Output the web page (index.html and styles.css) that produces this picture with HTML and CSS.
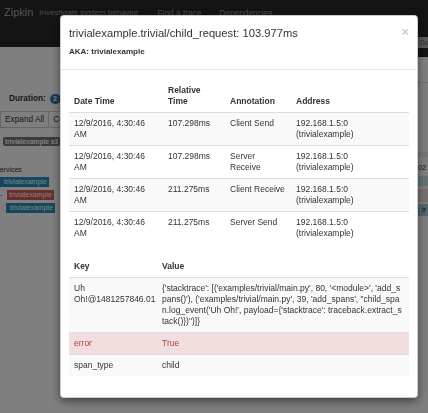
FILE: index.html
```html
<!DOCTYPE html>
<html lang="en">
<head>
<meta charset="utf-8">
<title>Zipkin - span detail</title>
<link rel="stylesheet" href="styles.css">
</head>
<body>
<header class="navbar">
  <span class="brand">Zipkin</span>
  <span class="tagline">Investigate system behavior</span>
  <span class="nav-link nav-find">Find a trace</span>
  <span class="nav-link">Dependencies</span>
  <div class="search-edge"><span class="go-btn">Go</span></div>
</header>

<main class="page">
  <section class="trace-side">
    <div class="duration"><span class="duration-label">Duration:</span><span class="badge">2</span></div>
    <div class="btn-group"><span class="btn">Expand All</span><span class="btn">Co</span></div>
    <div class="label-row"><span class="service-label">trivialexample x3</span></div>
    <div class="services-title">Services</div>
    <div class="svc-row"><span class="svc svc-blue">trivialexample</span></div>
    <div class="svc-row"><span class="dash">-</span><span class="svc svc-red">trivialexample</span></div>
    <div class="svc-row indent"><span class="svc svc-blue">trivialexample</span></div>
  </section>
  <section class="timeline-edge">
    <div class="tl-rule"></div>
    <div class="tl-band"></div>
    <div class="tl-tick">02</div>
    <div class="tl-row tl-row-blue"></div>
    <div class="tl-row tl-row-red"></div>
    <div class="tl-row tl-row-sel">: tr</div>
  </section>
</main>

<div class="backdrop"></div>

<div class="modal" role="dialog">
  <div class="modal-header">
    <span class="close">×</span>
    <h4 class="modal-title">trivialexample.trivial/child_request: 103.977ms</h4>
    <h5 class="aka">AKA: trivialexample</h5>
  </div>
  <div class="modal-body">
    <table class="table annotations">
      <colgroup><col class="c-date"><col class="c-rel"><col class="c-ann"><col class="c-addr"></colgroup>
      <thead>
        <tr><th>Date Time</th><th>Relative Time</th><th>Annotation</th><th>Address</th></tr>
      </thead>
      <tbody>
        <tr><td>12/9/2016, 4:30:46 AM</td><td>107.298ms</td><td>Client Send</td><td>192.168.1.5:0 (trivialexample)</td></tr>
        <tr><td>12/9/2016, 4:30:46 AM</td><td>107.298ms</td><td>Server Receive</td><td>192.168.1.5:0 (trivialexample)</td></tr>
        <tr><td>12/9/2016, 4:30:46 AM</td><td>211.275ms</td><td>Client Receive</td><td>192.168.1.5:0 (trivialexample)</td></tr>
        <tr><td>12/9/2016, 4:30:46 AM</td><td>211.275ms</td><td>Server Send</td><td>192.168.1.5:0 (trivialexample)</td></tr>
      </tbody>
    </table>
    <table class="table tags">
      <colgroup><col class="c-key"><col class="c-val"></colgroup>
      <thead>
        <tr><th>Key</th><th>Value</th></tr>
      </thead>
      <tbody>
        <tr><td>Uh Oh!@1481257846.01</td><td class="stack">{'stacktrace': [('examples/trivial/main.py', 80, '&lt;module&gt;', 'add_s<br>pans()'), ('examples/trivial/main.py', 39, 'add_spans', "child_spa<br>n.log_event('Uh Oh!', payload={'stacktrace': traceback.extract_s<br>tack()})")]}</td></tr>
        <tr class="danger"><td>error</td><td>True</td></tr>
        <tr><td>span_type</td><td>child</td></tr>
      </tbody>
    </table>
  </div>
</div>
</body>
</html>
```

FILE: styles.css
```css
* { box-sizing: border-box; }

html, body { margin: 0; padding: 0; }

body {
  width: 428px;
  height: 413px;
  overflow: hidden;
  background: #fff;
  color: #333;
  font-family: "Liberation Sans", Arial, Helvetica, sans-serif;
  font-size: 8.5px;
  line-height: 11px;
}

/* ---------- navbar (behind backdrop) ---------- */
.navbar {
  display: flex;
  align-items: flex-start;
  height: 47px;
  padding-left: 4px;
  background: #282828;
}
.brand {
  margin-top: 6px;
  font-size: 11px;
  line-height: 13px;
  color: #a8a8a8;
}
.tagline {
  margin-top: 8px;
  margin-left: 6px;
  font-size: 8px;
  line-height: 10px;
  color: #9a9a9a;
}
.nav-link {
  margin-top: 8px;
  margin-left: 18px;
  font-size: 8.3px;
  line-height: 10px;
  color: #9a9a9a;
}
.nav-find { margin-left: 19px; }
.search-edge {
  flex: none;
  margin-left: auto;
  width: 10px;
  height: 57px;
  padding-top: 37px;
  overflow: hidden;
  background: #282828;
}
.go-btn {
  display: block;
  width: 20px;
  height: 11px;
  padding-left: 1px;
  background: #b4b4b4;
  color: #5a5a5a;
  font-size: 8px;
  line-height: 11px;
}

/* ---------- page (behind backdrop) ---------- */
.page { display: flex; }

.trace-side {
  flex: none;
  width: 60px;
  padding-top: 46px;
  overflow: hidden;
}
.duration {
  display: flex;
  align-items: center;
  gap: 4px;
  margin-left: 9px;
  white-space: nowrap;
}
.duration-label { font-size: 8.3px; font-weight: bold; line-height: 11px; }
.badge {
  padding: 0 4px 0 3px;
  border-radius: 6px;
  background: #337ab7;
  color: #fff;
  font-size: 7px;
  font-weight: bold;
  line-height: 10px;
}
.btn-group {
  display: flex;
  margin-top: 7px;
  white-space: nowrap;
  font-size: 8.3px;
}
.btn {
  padding: 2px 4px;
  border: 1px solid #ccc;
  background: #fff;
  line-height: 11px;
}
.btn + .btn { margin-left: -1px; }
.label-row { margin-top: 9px; margin-left: 3px; display: flex; }
.service-label {
  padding: 0 2px;
  border-radius: 2px;
  background: #777;
  color: #fff;
  font-size: 6.6px;
  font-weight: bold;
  line-height: 9px;
  white-space: nowrap;
}
.services-title {
  margin-top: 19px;
  text-indent: -5px;
  font-size: 7px;
  line-height: 9px;
  white-space: nowrap;
}
.svc-row {
  display: flex;
  align-items: center;
  margin-top: 3px;
  white-space: nowrap;
}
.svc-row.indent { padding-left: 6px; }
.dash { width: 7px; font-size: 7px; line-height: 10px; }
.svc {
  padding: 0 2px 0 4px;
  color: #fff;
  font-size: 7px;
  line-height: 10px;
}
.svc-red { padding-left: 2px; }
.svc-blue { background: #2490bf; }
.svc-red { background: #e05656; }

.timeline-edge {
  flex: none;
  margin-left: auto;
  width: 10px;
  padding-top: 35px;
  overflow: hidden;
  white-space: nowrap;
}
.tl-rule { height: 1px; background: #ddd; }
.tl-band { margin-top: 69px; height: 5px; background: #ececec; }
.tl-tick { margin-top: 6px; font-size: 7px; line-height: 9px; }
.tl-row { margin-top: 4px; height: 10px; font-size: 7px; line-height: 12px; }
.tl-row-blue { background: #cfe2ea; }
.tl-row-red { margin-top: 3px; height: 13px; background: #f2dede; }
.tl-row-sel { margin-top: 2px; height: 12px; background: #a9cde0; color: #333; }

/* ---------- backdrop + modal ---------- */
.backdrop {
  position: fixed;
  inset: 0;
  background: rgba(0, 0, 0, 0.5);
}

.modal {
  position: absolute;
  left: 60px;
  top: 15px;
  width: 358px;
  background: #fff;
  border: 1px solid rgba(0, 0, 0, 0.2);
  border-radius: 4px;
  box-shadow: 0 3px 9px rgba(0, 0, 0, 0.5);
}

.modal-header {
  position: relative;
  padding: 11px 8px 12px;
  border-bottom: 1px solid #e5e5e5;
}
.modal-title {
  margin: 0;
  font-size: 11.2px;
  font-weight: normal;
  line-height: 13px;
}
.aka {
  margin: 6px 0 0;
  font-size: 8px;
  font-weight: bold;
  line-height: 11px;
}
.close {
  position: absolute;
  top: 9px;
  right: 8px;
  font-size: 13px;
  font-weight: bold;
  line-height: 13px;
  color: rgba(0, 0, 0, 0.2);
}

.modal-body { padding: 10px 8px 9px; }

.table {
  width: 100%;
  margin-bottom: 12px;
  border-collapse: collapse;
  table-layout: fixed;
}
.table th,
.table td {
  padding: 5px;
  line-height: 11px;
  text-align: left;
}
.table th {
  vertical-align: bottom;
  font-weight: bold;
  border-bottom: 1px solid #ddd;
}
.table td {
  vertical-align: top;
  border-top: 1px solid #ddd;
}
.table tbody tr:first-child td { border-top: 0; }
.table tbody tr:nth-child(odd) td { background: #f9f9f9; }
.table tbody tr.danger td { background: #f2dede; color: #a94442; }
.table td.stack { white-space: nowrap; }

.c-date { width: 94px; }
.c-rel { width: 62px; }
.c-ann { width: 66px; }
.c-addr { width: 118px; }

.c-key { width: 88px; }
.c-val { width: 252px; }
```
